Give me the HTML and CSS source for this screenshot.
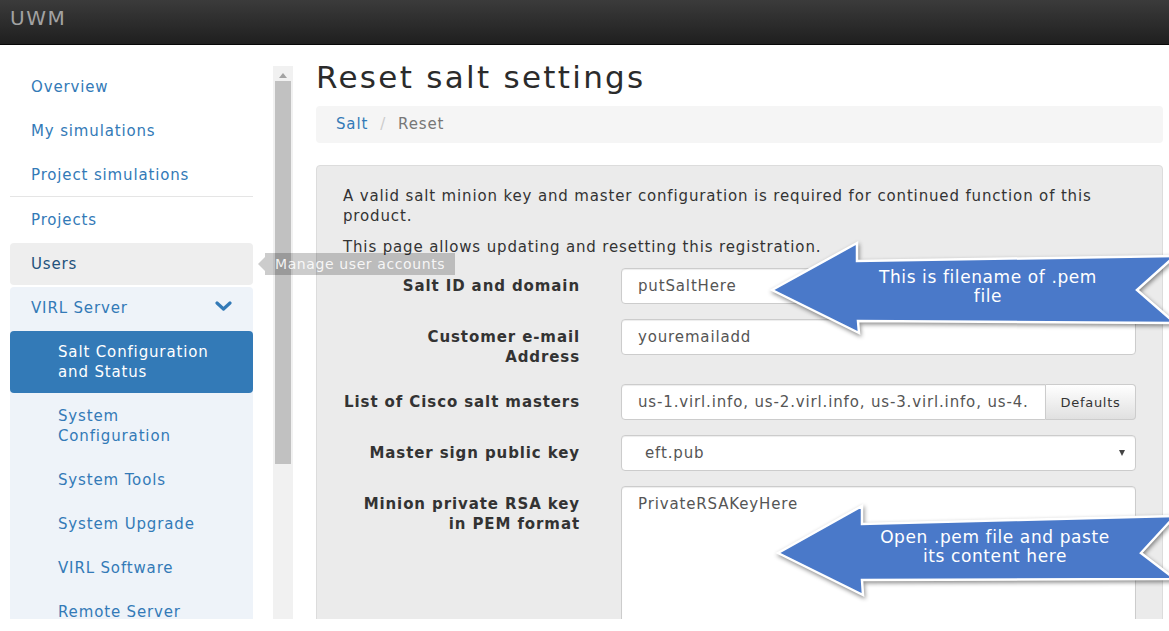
FILE: index.html
```html
<!DOCTYPE html>
<html>
<head>
<meta charset="utf-8">
<title>Reset salt settings</title>
<link rel="stylesheet" href="styles.css">
</head>
<body>
<header class="navbar"><span class="brand">UWM</span></header>
<div class="page">
  <nav class="sidebar">
    <ul class="nav">
      <li><a>Overview</a></li>
      <li><a>My simulations</a></li>
      <li><a>Project simulations</a></li>
      <li class="divider"></li>
      <li><a>Projects</a></li>
      <li class="hovered"><a>Users</a></li>
      <li class="group">
        <a class="group-head">VIRL Server
          <svg class="chevron" width="17" height="10" viewBox="0 0 17 10"><polyline points="2,2 8.5,8 15,2" fill="none" stroke="#337ab7" stroke-width="3.2" stroke-linecap="round" stroke-linejoin="round"/></svg>
        </a>
        <ul class="sub">
          <li class="active"><a>Salt Configuration and Status</a></li>
          <li><a>System<br>Configuration</a></li>
          <li><a>System Tools</a></li>
          <li><a>System Upgrade</a></li>
          <li><a>VIRL Software</a></li>
          <li><a>Remote Server</a></li>
        </ul>
      </li>
    </ul>
  </nav>
  <div class="scrollbar">
    <div class="sb-arrow"></div>
    <div class="sb-thumb"></div>
  </div>
  <main class="main">
    <h1>Reset salt settings</h1>
    <ol class="breadcrumb">
      <li class="crumb-link">Salt</li>
      <li class="sep">/</li>
      <li class="crumb-current">Reset</li>
    </ol>
    <div class="well">
      <p>A valid salt minion key and master configuration is required for continued function of this product.</p>
      <p>This page allows updating and resetting this registration.</p>
      <form class="form">
        <div class="row">
          <label>Salt ID and domain</label>
          <div class="control">putSaltHere</div>
        </div>
        <div class="row">
          <label>Customer e-mail<br>Address</label>
          <div class="control">youremailadd</div>
        </div>
        <div class="row">
          <label>List of Cisco salt masters</label>
          <div class="input-group">
            <div class="control grouped">us-1.virl.info, us-2.virl.info, us-3.virl.info, us-4.</div>
            <div class="btn">Defaults</div>
          </div>
        </div>
        <div class="row">
          <label>Master sign public key</label>
          <div class="control select"><span>eft.pub</span><span class="caret"></span></div>
        </div>
        <div class="row">
          <label>Minion private RSA key<br>in PEM format</label>
          <div class="control textarea">PrivateRSAKeyHere</div>
        </div>
      </form>
    </div>
  </main>
</div>
<div class="tooltip">Manage user accounts</div>
<svg class="arrows" width="1169" height="631" viewBox="0 0 1169 631">
  <polygon points="772,290 857,243 857,261 1175,256 1137,290 1175,323 858,321 859,333" class="arrow-shape"/>
  <polygon points="778,553 862,506 862,524 1175,516 1141,553 1175,579 862,580 863,595" class="arrow-shape"/>
</svg>
<div class="arrow-text a1">This is filename of .pem<br>file</div>
<div class="arrow-text a2">Open .pem file and paste<br>its content here</div>
</body>
</html>
```
FILE: styles.css
```css
html, body {
  margin: 0;
  padding: 0;
}
body {
  position: relative;
  width: 1169px;
  height: 631px;
  overflow: hidden;
  background: #fff;
  color: #333;
  font-family: "DejaVu Sans", "Liberation Sans", sans-serif;
  font-size: 15px;
  letter-spacing: 0.85px;
}

/* top bar */
.navbar {
  height: 45px;
  border-bottom: 1px solid #080808;
  background: linear-gradient(#3b3b3b, #1f1f1f);
  padding: 8px 0 0 10px;
  box-sizing: border-box;
}
.brand {
  display: block;
  color: #a2a2a2;
  font-size: 20px;
  line-height: 20px;
  letter-spacing: 1.5px;
}

/* page */
.page {
  display: flex;
  height: 574px;
  overflow: hidden;
  padding-left: 10px;
}

/* sidebar */
.sidebar {
  width: 243px;
  flex: none;
  padding-top: 19px;
}
.nav, .sub {
  list-style: none;
  margin: 0;
  padding: 0;
}
.nav li {
  margin-top: 2px;
}
.nav a {
  display: block;
  padding: 11px 10px 11px 21px;
  line-height: 20px;
  color: #337ab7;
  border-radius: 4px;
}
.nav li.divider {
  margin: 0;
  height: 1px;
  background: #e5e5e5;
}
.hovered a {
  background: #eeeeee;
  color: #23527c;
}
.group {
  background: #eef3f9;
  border-radius: 4px;
}
.nav a.group-head {
  display: flex;
  justify-content: space-between;
  align-items: center;
  padding-right: 21px;
}
.chevron {
  display: block;
  margin-top: -4px;
}
.sub li a {
  padding-left: 48px;
}
.sub li.active a {
  background: #337ab7;
  color: #fff;
}

/* fake scrollbar */
.scrollbar {
  flex: none;
  width: 20px;
  margin: 21px 0 0 20px;
  background: #f1f1f1;
  display: flex;
  flex-direction: column;
  align-items: center;
}
.sb-arrow {
  margin-top: 7px;
  width: 0;
  height: 0;
  border-left: 4px solid transparent;
  border-right: 4px solid transparent;
  border-bottom: 5px solid #a3a3a3;
}
.sb-thumb {
  margin-top: 3px;
  width: 16px;
  height: 383px;
  background: #c1c1c1;
}

/* main */
.main {
  flex: none;
  width: 847px;
  margin-left: 23px;
  padding-top: 16px;
}
h1 {
  margin: 0;
  font-size: 31px;
  line-height: 33px;
  font-weight: normal;
  letter-spacing: 2.3px;
  color: #2b2b2b;
}
.breadcrumb {
  display: flex;
  list-style: none;
  margin: 12px 0 0;
  padding: 8px 20px;
  line-height: 21px;
  background: #f5f5f5;
  border-radius: 4px;
}
.crumb-link { color: #337ab7; }
.sep { color: #ccc; margin: 0 12px; }
.crumb-current { color: #777; }

.well {
  margin-top: 22px;
  height: 600px;
  background: #ebebeb;
  border: 1px solid #dcdcdc;
  border-radius: 4px;
  padding: 20px 26px;
}
.well p {
  margin: 0 0 11px;
  line-height: 20px;
}
.form {
  margin-top: 6px;
}
.row {
  display: grid;
  grid-template-columns: 237px 1fr;
  column-gap: 41px;
  margin-bottom: 15px;
}
.row label {
  text-align: right;
  font-weight: bold;
  line-height: 20px;
  padding: 8px 0 2px;
  letter-spacing: 0.9px;
  color: #333;
}
.control {
  box-sizing: border-box;
  height: 36px;
  border: 1px solid #ccc;
  border-radius: 4px;
  background: #fff;
  padding: 0 16px;
  line-height: 34px;
  color: #555;
  white-space: nowrap;
  overflow: hidden;
  box-shadow: inset 0 1px 1px rgba(0, 0, 0, 0.075);
}
.input-group {
  display: flex;
}
.control.grouped {
  flex: 1;
  border-radius: 4px 0 0 4px;
}
.btn {
  box-sizing: border-box;
  width: 90px;
  height: 36px;
  flex: none;
  display: flex;
  align-items: center;
  justify-content: center;
  border: 1px solid #ccc;
  border-left: 0;
  border-radius: 0 4px 4px 0;
  background: linear-gradient(#ffffff, #e0e0e0);
  color: #333;
  font-size: 13px;
  letter-spacing: 0.7px;
}
.select {
  display: flex;
  justify-content: space-between;
  align-items: center;
  padding: 0 10px 0 23px;
}
.caret {
  width: 0;
  height: 0;
  border-left: 3.5px solid transparent;
  border-right: 3.5px solid transparent;
  border-top: 6px solid #444;
}
.textarea {
  height: 220px;
  line-height: 20px;
  padding: 7px 16px;
}

/* tooltip overlay */
.tooltip {
  position: absolute;
  left: 265px;
  top: 253px;
  width: 190px;
  height: 22px;
  box-sizing: border-box;
  padding-left: 10px;
  line-height: 22px;
  font-size: 14px;
  letter-spacing: 0.6px;
  color: rgba(255, 255, 255, 0.88);
  background: rgba(0, 0, 0, 0.2);
}
.tooltip::before {
  content: "";
  position: absolute;
  left: -7px;
  top: 4px;
  border-top: 7px solid transparent;
  border-bottom: 7px solid transparent;
  border-right: 7px solid rgba(0, 0, 0, 0.2);
}

/* callout arrows overlay */
.arrows {
  position: absolute;
  left: 0;
  top: 0;
  pointer-events: none;
}
.arrow-shape {
  fill: #4a79c9;
  stroke: #fff;
  stroke-width: 2.5;
  stroke-linejoin: miter;
  filter: drop-shadow(1px 2px 2px rgba(0, 0, 0, 0.45));
}
.arrow-text {
  position: absolute;
  text-align: center;
  color: #fff;
  font-size: 17px;
  line-height: 19px;
  letter-spacing: 0.6px;
}
.a1 {
  left: 866px;
  top: 268px;
  width: 244px;
}
.a2 {
  left: 873px;
  top: 528px;
  width: 244px;
}
```
